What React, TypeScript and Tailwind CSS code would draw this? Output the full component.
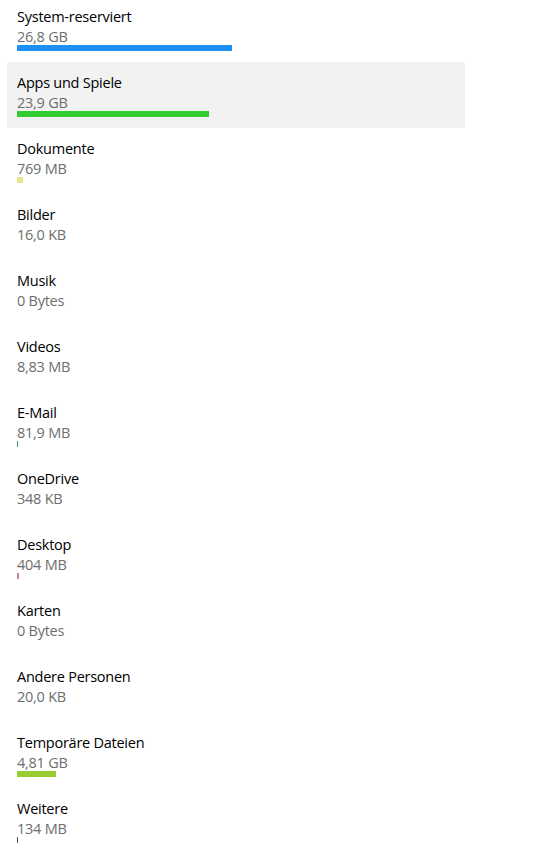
import React from 'react';

type Item = { name: string; size: string; bar: number; color: string; active?: boolean };

const items: Item[] = [
  { name: 'System-reserviert', size: '26,8 GB', bar: 215, color: 'bg-[#1e8ff5]' },
  { name: 'Apps und Spiele', size: '23,9 GB', bar: 192, color: 'bg-[#33cc33]', active: true },
  { name: 'Dokumente', size: '769 MB', bar: 6, color: 'bg-[#ece589]' },
  { name: 'Bilder', size: '16,0 KB', bar: 0, color: 'bg-[#777777]' },
  { name: 'Musik', size: '0 Bytes', bar: 0, color: 'bg-[#777777]' },
  { name: 'Videos', size: '8,83 MB', bar: 0, color: 'bg-[#777777]' },
  { name: 'E-Mail', size: '81,9 MB', bar: 1, color: 'bg-[#3a9a70]' },
  { name: 'OneDrive', size: '348 KB', bar: 0, color: 'bg-[#777777]' },
  { name: 'Desktop', size: '404 MB', bar: 2, color: 'bg-[#b98a8d]' },
  { name: 'Karten', size: '0 Bytes', bar: 0, color: 'bg-[#777777]' },
  { name: 'Andere Personen', size: '20,0 KB', bar: 0, color: 'bg-[#777777]' },
  { name: 'Temporäre Dateien', size: '4,81 GB', bar: 39, color: 'bg-[#99cc33]' },
  { name: 'Weitere', size: '134 MB', bar: 1, color: 'bg-[#555555]' },
];

export default function App() {
  return (
    <div className="w-[534px] h-[855px] overflow-hidden bg-white font-['Open_Sans',sans-serif]">
      <div className="-mt-[4px] ml-[7px] w-[458px] flex flex-col">
        {items.map((it) => (
          <div
            key={it.name}
            className={`h-[66px] px-[10px] pt-[11px] flex flex-col ${it.active ? 'bg-[#f2f2f2]' : ''}`}
          >
            <span className="text-[14.5px] leading-[20px] text-[#000000] tracking-[-0.25px]">{it.name}</span>
            <span className="text-[14.5px] leading-[20px] text-[#6e6e6e] tracking-[-0.25px]">{it.size}</span>
            <div className="h-[6px] mt-[-2px]">
              {it.bar > 0 && <div className={`h-[6px] ${it.color}`} style={{ width: it.bar }} />}
            </div>
          </div>
        ))}
      </div>
    </div>
  );
}
